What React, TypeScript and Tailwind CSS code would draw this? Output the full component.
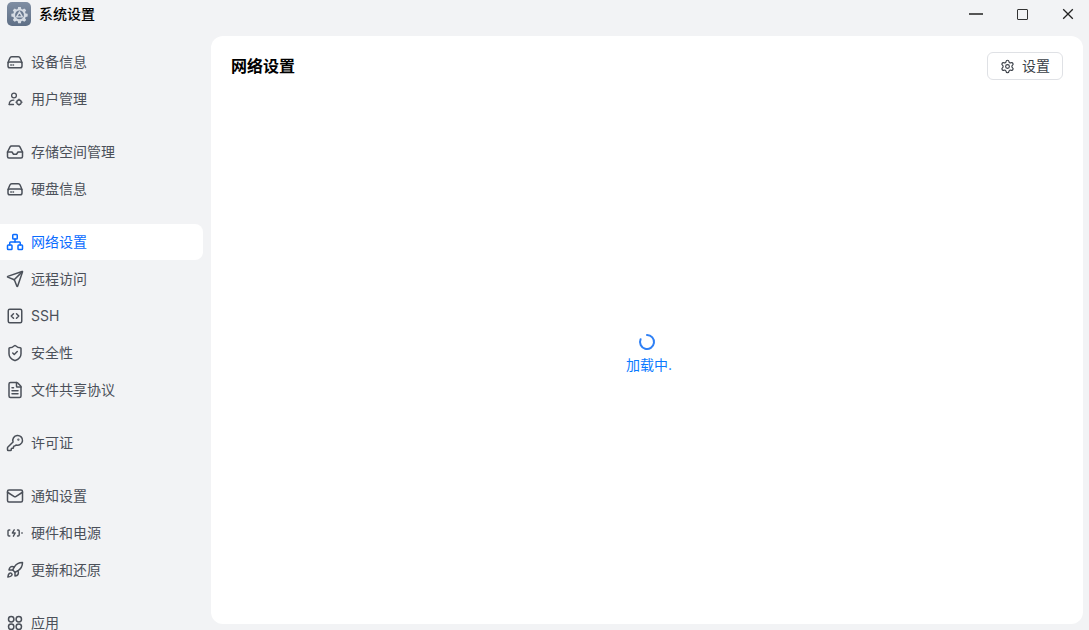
import { FileText, Inbox, KeyRound, Mail, Network, Rocket, Send, Settings, ShieldCheck, SquareCode } from 'lucide-react';
import type { ReactNode } from 'react';

const iconClass = 'w-[18px] h-[18px] shrink-0';

function DriveIcon() {
  return (
    <svg viewBox="0 0 18 18" fill="none" stroke="currentColor" strokeWidth="1.5" strokeLinecap="round" strokeLinejoin="round" className={iconClass}>
      <path d="M2 9.500 3.900 5A2 2 0 0 1 5.700 3.800h6.600A2 2 0 0 1 14.100 5L16 9.500" />
      <rect x="2" y="9" width="14" height="5.800" rx="1.800" />
      <path d="M4.800 12h.5M7 12h.5" />
    </svg>
  );
}

function UserGearIcon() {
  return (
    <svg viewBox="0 0 18 18" fill="none" stroke="currentColor" strokeWidth="1.300" strokeLinecap="round" className={iconClass}>
      <circle cx="8" cy="5.500" r="2.400" />
      <path d="M3.200 14.500c0-2.800 1.900-4.300 4.600-4.300" />
      <path d="M3.200 14.500h4.300" />
      <circle cx="13" cy="12.200" r="2.200" />
      <path d="M13 9.200v.5M13 14.700v.5M10 12.200h.5M15.500 12.200h.5" />
    </svg>
  );
}

function PowerIcon() {
  return (
    <svg viewBox="0 0 18 18" fill="none" stroke="currentColor" strokeWidth="1.400" strokeLinecap="round" strokeLinejoin="round" className={iconClass}>
      <path d="M3.800 6H3a1 1 0 0 0-1 1v4a1 1 0 0 0 1 1h.8" />
      <path d="M11.500 6h.7a1 1 0 0 1 1 1v4a1 1 0 0 1-1 1h-.7" />
      <path d="M8.200 5.800 6.300 9h2.900l-1.800 3.200" />
      <path d="M16 8.700v.6" />
    </svg>
  );
}

function AppsIcon() {
  return (
    <svg viewBox="0 0 18 18" fill="none" stroke="currentColor" strokeWidth="1.500" className={iconClass}>
      <circle cx="5.200" cy="5.200" r="2.700" />
      <circle cx="12.800" cy="5.200" r="2.700" />
      <circle cx="5.200" cy="12.800" r="2.700" />
      <circle cx="12.800" cy="12.800" r="2.700" />
    </svg>
  );
}

interface Item {
  label: string;
  icon: ReactNode;
  active?: boolean;
}

const groups: Item[][] = [
  [
    { label: '设备信息', icon: <DriveIcon /> },
    { label: '用户管理', icon: <UserGearIcon /> },
  ],
  [
    { label: '存储空间管理', icon: <Inbox className={iconClass} /> },
    { label: '硬盘信息', icon: <DriveIcon /> },
  ],
  [
    { label: '网络设置', icon: <Network className={iconClass} />, active: true },
    { label: '远程访问', icon: <Send className={iconClass} /> },
    { label: 'SSH', icon: <SquareCode className={iconClass} /> },
    { label: '安全性', icon: <ShieldCheck className={iconClass} /> },
    { label: '文件共享协议', icon: <FileText className={iconClass} /> },
  ],
  [{ label: '许可证', icon: <KeyRound className={iconClass} /> }],
  [
    { label: '通知设置', icon: <Mail className={iconClass} /> },
    { label: '硬件和电源', icon: <PowerIcon /> },
    { label: '更新和还原', icon: <Rocket className={iconClass} /> },
  ],
  [{ label: '应用', icon: <AppsIcon /> }],
];

function AppLogo() {
  return (
    <div className="w-6 h-6 rounded-[5px] bg-gradient-to-b from-[#7f8ea3] to-[#5f6f86] flex items-center justify-center">
      <svg viewBox="0 0 24 24" className="w-[19px] h-[19px]">
        <path
          fill="#d5dbe3"
          d="M10.300 2.500h3.400l.5 2.600 1.700.7 2.200-1.500 2.400 2.400-1.500 2.200.7 1.700 2.600.5v3.400l-2.600.5-.7 1.700 1.500 2.200-2.400 2.400-2.200-1.500-1.700.7-.5 2.600h-3.400l-.5-2.600-1.700-.7-2.200 1.500-2.400-2.400 1.500-2.200-.7-1.700-2.600-.5v-3.400l2.600-.5.7-1.700-1.500-2.200 2.400-2.400 2.200 1.500 1.700-.7z"
        />
        <circle cx="12" cy="12.500" r="5.600" fill="#6b7a90" />
        <path d="M12 8.600 15.600 15H8.400z" fill="none" stroke="#d5dbe3" strokeWidth="1.700" strokeLinejoin="round" />
      </svg>
    </div>
  );
}

export default function App() {
  return (
    <div className="h-screen w-full overflow-hidden flex flex-col bg-[#f2f3f5] font-['Inter','Noto_Sans_CJK_SC',sans-serif]">
      {/* Title bar */}
      <div className="h-9 shrink-0 flex items-start justify-between">
        <div className="flex items-center gap-2 pl-[7px] pt-0.5">
          <AppLogo />
          <span className="text-[14px] leading-6 font-medium text-black">系统设置</span>
        </div>
        <div className="flex items-center gap-8 pr-[14px] pt-[7px]">
          <div className="w-[14px] h-[14px] flex items-center justify-center">
            <div className="w-[14px] h-[2px] bg-[#555]" />
          </div>
          <div className="w-[14px] h-[14px] flex items-center justify-center">
            <div className="w-[11px] h-[11px] border-[1.5px] border-[#333] rounded-[1px]" />
          </div>
          <div className="w-[14px] h-[14px] flex items-center justify-center">
            <svg viewBox="0 0 12 12" className="w-3 h-3" stroke="#222" strokeWidth="1.300">
              <path d="M1.200 1.200 10.800 10.800M10.800 1.200 1.200 10.800" />
            </svg>
          </div>
        </div>
      </div>

      <div className="flex-1 min-h-0 flex">
        {/* Sidebar */}
        <nav className="w-[211px] shrink-0 pt-2 pr-2 flex flex-col gap-[17px] overflow-hidden">
          {groups.map((group, i) => (
            <div key={i} className="flex flex-col gap-px shrink-0">
              {group.map((item) => (
                <div
                  key={item.label}
                  className={`h-9 shrink-0 flex items-center gap-[7px] pl-[6px] rounded-r-lg text-[14px] ${
                    item.active ? 'bg-white text-[#0a6cff]' : 'text-[#4b5059]'
                  }`}
                >
                  {item.icon}
                  <span className="pb-0.5">{item.label}</span>
                </div>
              ))}
            </div>
          ))}
        </nav>

        {/* Main panel */}
        <main className="flex-1 mr-1.5 mb-1.5 bg-white rounded-xl flex flex-col">
          <div className="flex items-center justify-between pl-5 pr-5 pt-4">
            <h1 className="text-[16px] font-bold text-black">网络设置</h1>
            <button className="h-7 w-[76px] flex items-center justify-center gap-[7px] rounded-md border border-[#dfe1e5] text-[14px] text-[#3a3f47]">
              <Settings className="w-[15px] h-[15px]" strokeWidth={1.800} />
              <span className="pb-0.5">设置</span>
            </button>
          </div>
          <div className="flex-1 flex flex-col items-center justify-center pt-1">
            <svg viewBox="0 0 18 18" fill="none" stroke="#2f80f5" strokeWidth="2" strokeLinecap="round" className="w-[18px] h-[18px]">
              <path d="M9 2A7 7 0 1 1 2.600 6.200" />
            </svg>
            <div className="mt-1 pl-1 text-[14px] leading-5 text-[#0a7aff]">加载中.</div>
          </div>
        </main>
      </div>
    </div>
  );
}
